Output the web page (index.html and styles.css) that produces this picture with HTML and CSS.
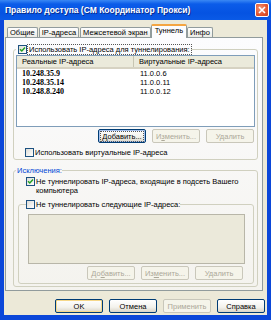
FILE: index.html
```html
<!DOCTYPE html>
<html lang="ru">
<head>
  <meta charset="UTF-8" />
  <title>Правило доступа</title>
  <link rel="stylesheet" href="styles.css">
</head>
<body>
  <div class="window">
    <div class="titlebar">
      <span class="title">Правило доступа (СМ Координатор Прокси)</span>
      <span class="close">
        <svg width="8" height="8" viewBox="0 0 8 8"><path d="M1 1 L7 7 M7 1 L1 7" stroke="#fff" stroke-width="1.6" /></svg>
      </span>
    </div>

    <div class="frame">
      <div class="tabs">
        <span class="tab">Общие</span>
        <span class="tab">IP-адреса</span>
        <span class="tab">Межсетевой экран</span>
        <span class="tab active">Туннель</span>
        <span class="tab">Инфо</span>
      </div>

      <div class="panel">
        <fieldset class="group">
          <legend>
            <span class="chk"><svg width="7" height="7" viewBox="0 0 7 7"><path d="M1 3.2 L2.8 5 L6 1.6" fill="none" stroke="#21a121" stroke-width="1.5" /></svg></span>
            <span class="focus">Использовать IP-адреса для туннелирования:</span>
          </legend>

          <div class="list">
            <div class="list-head">
              <span class="col1">Реальные IP-адреса</span>
              <span class="col2">Виртуальные IP-адреса</span>
            </div>
            <div class="row"><b class="col1">10.248.35.9</b><span class="col2">11.0.0.6</span></div>
            <div class="row"><b class="col1">10.248.35.14</b><span class="col2">11.0.0.11</span></div>
            <div class="row"><b class="col1">10.248.8.240</b><span class="col2">11.0.0.12</span></div>
          </div>

          <div class="btn-row">
            <button class="btn focused"><span class="focus"><u>Д</u>обавить...</span></button>
            <button class="btn" disabled>И<u>з</u>менить...</button>
            <button class="btn" disabled>Удалить</button>
          </div>

          <div class="check-row">
            <span class="chk"></span>
            <span>Использовать виртуальные IP-адреса</span>
          </div>
        </fieldset>

        <fieldset class="group excl">
          <legend class="blue">Исключения:</legend>

          <div class="check-row wrap">
            <span class="chk"><svg width="7" height="7" viewBox="0 0 7 7"><path d="M1 3.2 L2.8 5 L6 1.6" fill="none" stroke="#21a121" stroke-width="1.5" /></svg></span>
            <span class="text">Не туннелировать IP-адреса, входящие в подсеть Вашего компьютера</span>
          </div>

          <fieldset class="group inner">
            <legend>
              <span class="chk"></span>
              <span>Не туннелировать следующие IP-адреса:</span>
            </legend>
            <div class="list disabled"></div>
            <div class="btn-row">
              <button class="btn" disabled>До<u>б</u>авить...</button>
              <button class="btn" disabled>Из<u>м</u>енить...</button>
              <button class="btn" disabled>Удалить</button>
            </div>
          </fieldset>
        </fieldset>
      </div>

      <div class="dialog-buttons">
        <button class="btn default">OK</button>
        <button class="btn">Отмена</button>
        <button class="btn" disabled>Применить</button>
        <button class="btn">Справка</button>
      </div>
    </div>
  </div>
</body>
</html>
```

FILE: styles.css
```css
* {
  box-sizing: border-box;
}

body {
  margin: 0;
  font-family: "Liberation Sans", Arial, sans-serif;
  font-size: 7.5px;
  color: #000;
}

.window {
  width: 271px;
  height: 320px;
  background: #0b47d9;
  display: flex;
  flex-direction: column;
}

.titlebar {
  height: 20px;
  flex: none;
  display: flex;
  align-items: center;
  justify-content: space-between;
  padding: 0 2px 0 5px;
  background: linear-gradient(#3a88f4 0, #0b5ce9 4px, #0553e2 13px, #0a5ae6 20px);
}

.title {
  color: #fff;
  font-weight: bold;
  font-size: 8.5px;
  text-shadow: 1px 1px 0 #0a2c8c;
}

.close {
  width: 14px;
  height: 14px;
  border: 1px solid #fff;
  border-radius: 2px;
  background: radial-gradient(circle at 35% 35%, #f49272, #e2552f 60%, #c4401e);
  display: flex;
  align-items: center;
  justify-content: center;
}

.frame {
  flex: 1;
  margin: 0 4px 5px 4px;
  background: #ece9d8;
  display: flex;
  flex-direction: column;
}

/* вкладки */
.tabs {
  height: 17px;
  flex: none;
  display: flex;
  align-items: flex-end;
  padding-left: 3px;
}

.tab {
  height: 10px;
  line-height: 9px;
  padding: 0 2px;
  margin-right: 1px;
  border: 1px solid #919b9c;
  border-bottom: none;
  border-radius: 2px 2px 0 0;
  background: linear-gradient(#fefefe, #ecebe5);
  white-space: nowrap;
}

.tab.active {
  height: 14px;
  line-height: 10px;
  padding: 0 3px;
  margin: 0 0 -1px -1px;
  border-top: 2px solid #f4a542;
  background: #fcfcfe;
  position: relative;
  z-index: 1;
}

.panel {
  width: 258px;
  height: 254px;
  margin-left: 1px;
  padding-left: 7px;
  border: 1px solid #919b9c;
  background: linear-gradient(#fcfcfe, #f4f3ee);
}

/* групбоксы */
.group {
  width: 245px;
  min-width: 0;
  margin: 6px 0 0;
  padding: 1px 2px 2px;
  border: 1px solid #d0d0bf;
  border-radius: 3px;
}

.group legend {
  height: 10px;
  padding: 0 0 0 2px;
  display: flex;
  align-items: center;
  white-space: nowrap;
}

.group legend.blue {
  padding-left: 1px;
  color: #0046d5;
}

.group.excl {
  margin-top: 5px;
  padding: 2px 2px 2px;
}

.group.inner {
  width: 236px;
  margin: 4px 0 0 2px;
  padding: 5px 0 3px 9px;
}

.group.inner legend {
  margin-left: -2px;
  padding: 0;
}

.chk {
  width: 9px;
  height: 9px;
  flex: none;
  margin-right: 1px;
  border: 1px solid #1c5180;
  background: linear-gradient(135deg, #dcdcd7, #fff);
  display: flex;
  align-items: center;
  justify-content: center;
}

.focus {
  outline: 1px dotted #555;
  padding: 0 1px;
}

.list {
  height: 72px;
  border: 1px solid #7f9db9;
  background: #fff;
}

.list.disabled {
  width: 217px;
  height: 50px;
  border-color: #b8b6a8;
  background: #ebe9da;
}

.list-head {
  height: 13px;
  display: flex;
  line-height: 11px;
  background: #ebeadb;
  border-bottom: 2px solid #d6d2c2;
}

.list-head .col1 {
  width: 117px;
  padding-left: 5px;
  border-right: 1px solid #c7c5b2;
}

.list-head .col2 {
  padding-left: 5px;
}

.row {
  height: 9px;
  line-height: 9px;
  display: flex;
}

.row .col1 {
  width: 123px;
  padding-left: 5px;
  font-family: "Liberation Serif", "Times New Roman", serif;
  font-size: 8px;
}

.btn-row {
  display: flex;
  justify-content: flex-end;
  gap: 6px;
  margin-top: 2px;
  padding-right: 1px;
}

.inner .btn-row {
  width: 215px;
  padding-right: 0;
}

.btn {
  width: 48px;
  height: 14px;
  padding: 0;
  border: 1px solid #003c74;
  border-radius: 2px;
  background: linear-gradient(#ffffff, #f3f2ec 60%, #d9d4c7);
  font: inherit;
  color: #000;
}

.btn:disabled {
  border-color: #c9c7ba;
  background: #f5f4ea;
  color: #aca899;
}

.btn.focused {
  box-shadow: inset 0 0 0 1px #a9c4ef;
}

.btn.default {
  box-shadow: inset 0 0 0 1px #f6d88a;
}

.check-row {
  height: 9px;
  margin-top: 5px;
  padding-left: 9px;
  display: flex;
  align-items: center;
  white-space: nowrap;
}

.check-row.wrap {
  height: auto;
  margin-top: 0;
  padding-left: 10px;
  align-items: flex-start;
  white-space: normal;
}

.check-row.wrap .text {
  width: 215px;
  line-height: 9px;
}

.dialog-buttons {
  display: flex;
  justify-content: flex-end;
  gap: 6px;
  margin-top: 8px;
  padding-right: 2px;
}
```
